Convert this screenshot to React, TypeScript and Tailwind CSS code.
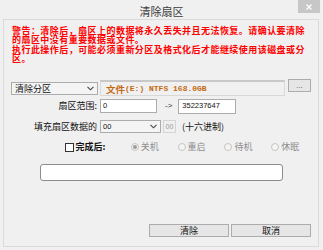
const cjk = { fontFamily: '"Noto Sans CJK SC", "Liberation Sans", sans-serif' };
const latin = { fontFamily: '"Liberation Sans", sans-serif' };

const warningLines = [
  '警告：清除后，扇区上的数据将永久丢失并且无法恢复。请确认要清除',
  '的扇区中没有重要数据或文件。',
  '执行此操作后，可能必须重新分区及格式化后才能继续使用该磁盘或分',
  '区。',
];

function Chevron() {
  return (
    <svg width="7" height="5" viewBox="0 0 7 5" className="shrink-0">
      <path d="M0.5 0.8 L3.5 3.8 L6.5 0.8" fill="none" stroke="#444" strokeWidth="1.1" />
    </svg>
  );
}

function Radio({ label, checked }: { label: string; checked?: boolean }) {
  return (
    <div className="flex w-[50px] items-center gap-[2px]">
      <span className="flex h-[8px] w-[8px] items-center justify-center rounded-full border border-[#c4c4c4] bg-[#f4f4f4]">
        {checked && <span className="h-[4px] w-[4px] rounded-full bg-[#9a9a9a]" />}
      </span>
      <span className="h-[10px] text-[9px] leading-[10px] text-[#8d8d8d]">{label}</span>
    </div>
  );
}

export default function App() {
  return (
    <div className="flex h-[250px] w-[323px] flex-col bg-[#f0f0f0]" style={cjk}>
      <div className="flex h-[19px] shrink-0">
        <div className="ml-[3px] w-[22px]" />
        <div className="h-[19px] flex-1 pt-[5px] text-center text-[11px] leading-[13px] text-[#3c3c3c]">清除扇区</div>
        <div className="mr-[3px] flex h-[13px] w-[22px] items-center justify-center bg-[#c7c7c7]">
          <svg width="6" height="6" viewBox="0 0 6 6">
            <path d="M0.5 0.5 L5.5 5.5 M5.5 0.5 L0.5 5.5" stroke="#fff" strokeWidth="1.2" />
          </svg>
        </div>
      </div>

      <div className="ml-[3px] mr-[4px] flex h-[228px] flex-col border border-[#dadada]">
        <div className="ml-[8px] mt-[6px] flex h-[38px] flex-col whitespace-nowrap text-[9px] font-bold tracking-[0.45px] text-[#ff0000]">
          {warningLines.map((line) => (
            <div key={line} className="h-[9.4px] overflow-visible leading-[9.4px]">
              {line}
            </div>
          ))}
        </div>

        <div className="mt-[15px] flex h-[17px] items-start">
          <div className="ml-[7px] mt-[3px] flex h-[13px] w-[87px] items-center justify-between border border-[#acacac] bg-[#f4f4f4] pl-[3px] pr-[3px]">
            <span className="h-[10px] text-[9px] leading-[10px] text-[#111]">清除分区</span>
            <Chevron />
          </div>
          <div className="ml-[2px] mt-[1px] flex h-[16px] w-[185px] items-center border border-t-2 border-[#d8d8d8] border-t-[#c8c8c8] bg-[#f0f0f0] pl-[5px] font-bold text-[#c46a12]">
            <span className="h-[10px] text-[9.5px] leading-[10px]">文件</span>
            <span className="text-[8px] leading-none" style={{ fontFamily: '"Liberation Mono", monospace' }}>
              (E:) NTFS 168.0GB
            </span>
          </div>
          <div className="ml-[3px] flex h-[13px] w-[23px] items-center justify-center border border-[#acacac] bg-[#e6e6e6] text-[8px] leading-none text-[#555]" style={latin}>
            ...
          </div>
        </div>

        <div className="mt-[2px] flex h-[16px] items-center">
          <div className="h-[10px] w-[93px] text-right text-[9px] leading-[10px] text-[#111]">扇区范围:</div>
          <div className="ml-[3px] flex h-[14px] w-[57px] items-center border border-[#acacac] bg-white pl-[2px] text-[7.5px] text-[#111]" style={latin}>
            0
          </div>
          <div className="ml-[8px] text-[8px] leading-none text-[#333]" style={latin}>
            -&gt;
          </div>
          <div className="ml-[6px] flex h-[15px] w-[58px] items-center border border-[#acacac] bg-white pl-[3px] text-[7.5px] text-[#111]" style={latin}>
            352237647
          </div>
        </div>

        <div className="mt-[5px] flex h-[15px] items-center">
          <div className="h-[10px] w-[93px] text-right text-[9px] leading-[10px] text-[#111]">填充扇区数据的</div>
          <div className="ml-[3px] flex h-[13px] w-[61px] items-center justify-between border border-[#acacac] bg-[#f4f4f4] pl-[2px] pr-[3px]">
            <span className="text-[7.5px] leading-none text-[#111]" style={latin}>00</span>
            <Chevron />
          </div>
          <div className="ml-[2px] flex h-[13px] w-[13px] items-center justify-center border border-[#d4d4d4] text-[7px] leading-none text-[#9a9a9a]" style={latin}>
            00
          </div>
          <div className="ml-[6px] h-[10px] text-[9px] leading-[10px] text-[#111]">(十六进制)</div>
        </div>

        <div className="mt-[7px] flex h-[12px] items-center">
          <span className="ml-[61px] h-[9px] w-[9px] border border-[#333] bg-white" />
          <span className="ml-[2px] h-[10px] w-[59px] text-[9px] font-bold leading-[10px] text-[#111]">完成后:</span>
          <Radio label="关机" checked />
          <Radio label="重启" />
          <Radio label="待机" />
          <Radio label="休眠" />
        </div>

        <div className="ml-[36px] mt-[11px] h-[17px] w-[243px] shrink-0 rounded-[3px] border border-[#8c8c8c] bg-white" />

        <div className="mb-[9px] mr-[7px] mt-auto flex justify-end gap-[2px]">
          <div className="flex h-[13px] w-[80px] items-center justify-center border border-[#acacac] bg-[#e6e6e6] text-[9px] leading-none text-[#111]">
            清除
          </div>
          <div className="flex h-[13px] w-[80px] items-center justify-center border border-[#acacac] bg-[#e6e6e6] text-[9px] leading-none text-[#111]">
            取消
          </div>
        </div>
      </div>
    </div>
  );
}
